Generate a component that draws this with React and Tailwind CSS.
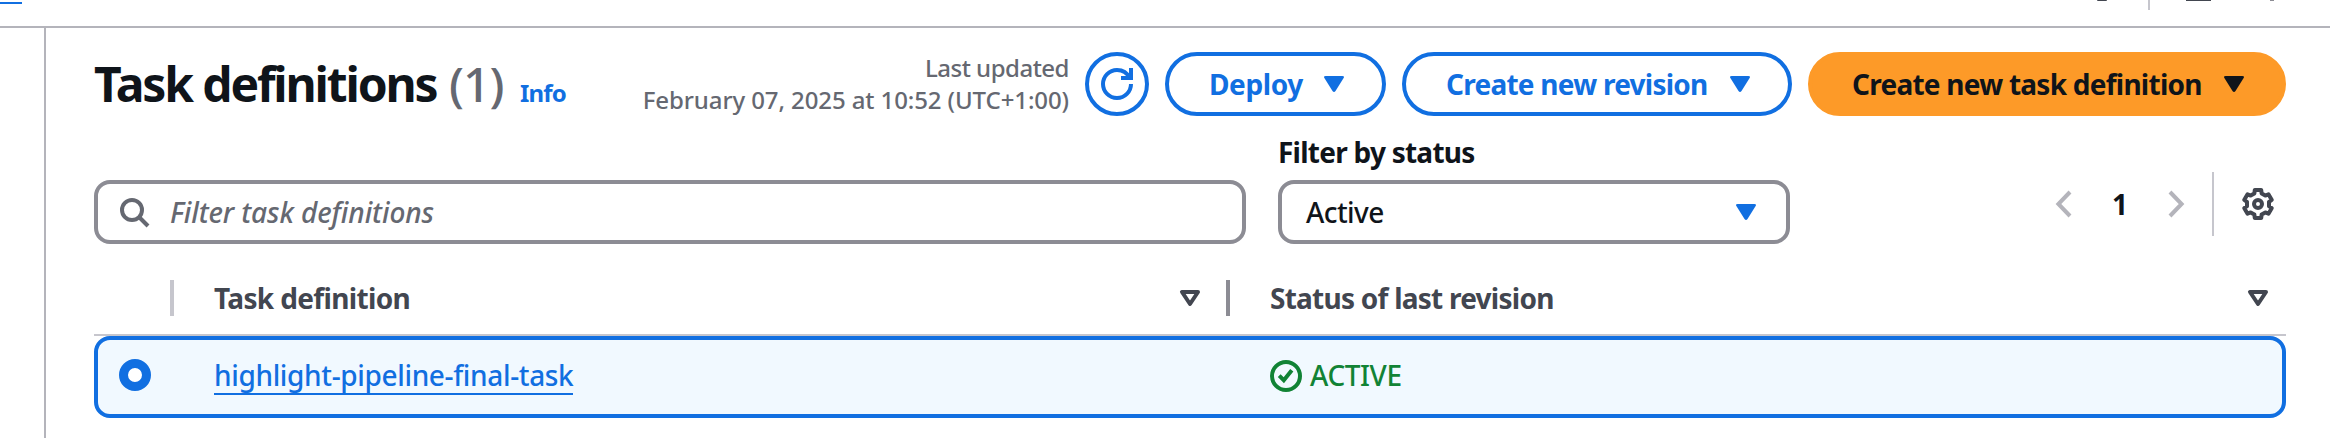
import React from 'react';

function FilledCaret({ className = '' }) {
  return (
    <svg className={`block h-8 w-8 shrink-0 ${className}`} viewBox="0 0 32 32">
      <path d="M7.600 8h16.800q2.400 0 1.200 2.100l-8.100 12.800q-1.500 2-3 0L6.400 10.100Q5.200 8 7.600 8Z" fill="currentColor" />
    </svg>
  );
}

function SortCaret() {
  return (
    <svg className="block h-8 w-8 shrink-0" viewBox="0 0 32 32" fill="none" stroke="currentColor" strokeWidth="4" strokeLinejoin="round">
      <path d="M8 10h16l-8 12Z" />
    </svg>
  );
}

function Refresh() {
  return (
    <svg className="block h-8 w-8" viewBox="0 0 16 16" fill="none" stroke="currentColor" strokeWidth="2">
      <path d="M15 8c0 3.870-3.130 7-7 7s-7-3.130-7-7 3.130-7 7-7c2.790 0 5.200 1.630 6.330 4" />
      <path d="M10 5h5V0" />
    </svg>
  );
}

function Search() {
  return (
    <svg className="block h-8 w-8 shrink-0 text-[#656871]" viewBox="0 0 16 16" fill="none" stroke="currentColor" strokeWidth="2">
      <circle cx="7" cy="7" r="5" />
      <path d="m15 15-4.500-4.500" />
    </svg>
  );
}

// Outline of a six-toothed cog, as polar points around (8, 8).
const gearPoints = [0, 60, 120, 180, 240, 300]
  .flatMap((tooth) => [
    [5.6, tooth - 19],
    [7.15, tooth - 13],
    [7.15, tooth + 13],
    [5.6, tooth + 19],
  ])
  .map(([r, deg]) => {
    const a = (deg * Math.PI) / 180;
    return `${(8 + r * Math.sin(a)).toFixed(2)},${(8 - r * Math.cos(a)).toFixed(2)}`;
  })
  .join(' ');

function Gear() {
  return (
    <svg className="block h-8 w-8 shrink-0 text-[#424650]" viewBox="0 0 16 16" fill="none" stroke="currentColor" strokeWidth="2" strokeLinejoin="round">
      <polygon points={gearPoints} />
      <circle cx="8" cy="8" r="2" />
    </svg>
  );
}

function StatusCheck() {
  return (
    <svg className="block h-8 w-8 shrink-0" viewBox="0 0 16 16" fill="none" stroke="currentColor" strokeWidth="2">
      <circle cx="8" cy="8" r="7" />
      <path d="m4.600 7.800 2.300 2.300 4-5" />
    </svg>
  );
}

function Chevron({ d }) {
  return (
    <svg className="block h-8 w-8 shrink-0 text-[#b4b4bb]" viewBox="0 0 16 16" fill="none" stroke="currentColor" strokeWidth="2">
      <path d={d} />
    </svg>
  );
}

const button = 'flex h-16 shrink-0 items-center justify-between rounded-full border-4 pl-10 pr-8 text-[28px] font-bold';

export default function App() {
  return (
    <div className="flex h-[438px] w-[2330px] flex-col overflow-hidden bg-white font-['Noto_Sans','Open_Sans',sans-serif] font-medium text-[#0f141a]">
      <header className="flex h-7 shrink-0 items-start justify-between border-b-2 border-[#b4b4bb]">
        <div className="mt-0.5 h-0.5 w-[22px] bg-[#116fe1]" />
        <div className="flex w-[233px] items-start">
          <div className="h-px w-2.5 rounded-b bg-[#424650]" />
          <div className="ml-[41px] h-2.5 w-0.5 bg-[#c6c6cd]" />
          <div className="ml-9 h-px w-[25px] bg-[#424650]" />
          <div className="ml-[59px] h-px w-1 bg-[#8c8c94]" />
        </div>
      </header>

      <main className="ml-11 flex flex-1 flex-col border-l-2 border-[#b4b4bb] pl-12 pr-11 pt-6">
        <div className="flex h-16 shrink-0 items-start">
          <h1 className="flex items-baseline whitespace-nowrap pt-0.5 leading-[60px]">
            <span className="w-[355px] text-[48px] font-bold tracking-[-2.150px]">Task definitions</span>
            <span className="w-[71px] text-[48px] tracking-[-1px] text-[#656871]">(1)</span>
            <a className="text-[24px] font-bold tracking-[-0.800px] text-[#116fe1]">Info</a>
          </h1>
          <div className="ml-auto flex gap-4">
            <div className="whitespace-nowrap text-right text-[24px] leading-8 text-[#656871]">
              <div className="tracking-[-0.500px]">Last updated</div>
              <div className="tracking-[-0.100px]">February 07, 2025 at 10:52 (UTC+1:00)</div>
            </div>
            <button className="flex h-16 w-16 items-center justify-center rounded-full border-4 border-[#116fe1] text-[#116fe1]">
              <Refresh />
            </button>
            <button className={`${button} w-[221px] border-[#116fe1] text-[#116fe1]`}>
              <span className="tracking-[-0.400px]">Deploy</span>
              <FilledCaret />
            </button>
            <button className={`${button} w-[390px] border-[#116fe1] text-[#116fe1]`}>
              <span className="tracking-[-0.750px]">Create new revision</span>
              <FilledCaret />
            </button>
            <button className={`${button} w-[478px] border-[#fd9a28] bg-[#fd9a28]`}>
              <span className="tracking-[-0.750px]">Create new task definition</span>
              <FilledCaret />
            </button>
          </div>
        </div>

        <div className="mt-[15px] flex h-[113px] shrink-0 items-end">
          <div className="flex h-16 w-[1152px] items-center rounded-2xl border-4 border-[#8c8c94] pl-5">
            <Search />
            <span className="ml-5 whitespace-nowrap pb-px text-[28px] italic tracking-[-0.100px] text-[#656871]">Filter task definitions</span>
          </div>
          <div className="ml-8 w-[512px]">
            <div className="mb-2 text-[28px] font-bold leading-10 tracking-[-0.750px]">Filter by status</div>
            <div className="flex h-16 items-center justify-between rounded-2xl border-4 border-[#8c8c94] pl-6 pr-6">
              <span className="pb-px text-[28px] tracking-[-0.600px]">Active</span>
              <FilledCaret className="text-[#116fe1]" />
            </div>
          </div>
          <div className="mb-2 ml-auto flex h-16 items-center">
            <Chevron d="M12 2 6.200 8 12 14" />
            <span className="w-[84px] text-center text-[28px] font-bold">1</span>
            <Chevron d="M4 2 9.800 8 4 14" />
            <div className="ml-[18px] mr-7 h-16 w-0.5 bg-[#c6c6cd]" />
            <div className="mr-3"><Gear /></div>
          </div>
        </div>

        <div className="flex h-[92px] shrink-0 items-center border-b-2 border-[#c6c6cd] pt-[18px] text-[28px] font-bold text-[#424650]">
          <div className="ml-[76px] h-9 w-1 bg-[#c6c6cd]" />
          <div className="ml-10 flex w-[992px] items-center justify-between">
            <span className="tracking-[-0.650px]">Task definition</span>
            <SortCaret />
          </div>
          <div className="ml-5 h-9 w-1 bg-[#8c8c94]" />
          <div className="ml-10 mr-3 flex flex-1 items-center justify-between">
            <span className="tracking-[-0.750px]">Status of last revision</span>
            <SortCaret />
          </div>
        </div>

        <div className="flex h-[82px] shrink-0 items-start rounded-2xl border-4 border-[#116fe1] bg-[#f1f9ff]">
          <div className="ml-[21px] mt-[19px] h-8 w-8 rounded-full border-[9px] border-[#116fe1] bg-white" />
          <div className="ml-[63px] mt-[17px] w-[1056px]">
            <a className="inline-block whitespace-nowrap border-b-2 border-[#116fe1] text-[28px] leading-9 tracking-[-0.350px] text-[#116fe1]">highlight-pipeline-final-task</a>
          </div>
          <div className="mt-[17px] flex items-center gap-2 text-[28px] leading-9 text-[#118335]">
            <div className="pt-0.5"><StatusCheck /></div>
            <span className="tracking-[-0.400px]">ACTIVE</span>
          </div>
        </div>
      </main>
    </div>
  );
}
